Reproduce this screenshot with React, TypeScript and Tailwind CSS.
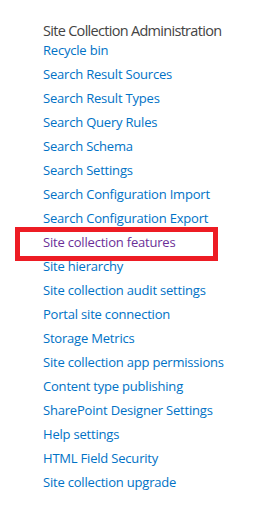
import React from "react";

const links = [
  "Recycle bin",
  "Search Result Sources",
  "Search Result Types",
  "Search Query Rules",
  "Search Schema",
  "Search Settings",
  "Search Configuration Import",
  "Search Configuration Export",
  "Site collection features",
  "Site hierarchy",
  "Site collection audit settings",
  "Portal site connection",
  "Storage Metrics",
  "Site collection app permissions",
  "Content type publishing",
  "SharePoint Designer Settings",
  "Help settings",
  "HTML Field Security",
  "Site collection upgrade",
];

export default function App() {
  return (
    <div
      className="w-[268px] h-[517px] bg-white pl-[43px] pt-[23px]"
      style={{ fontFamily: '"Segoe UI", "Open Sans", "Liberation Sans", sans-serif' }}
    >
      <h2 className="text-[14.5px] leading-[15px] text-[#444444] font-normal tracking-[-0.7px]">
        Site Collection Administration
      </h2>
      <ul className="flex flex-col">
        {links.map((l, i) => (
          <li key={l} className="relative h-[24px] flex items-center">
            {i === 8 && (
              <span className="absolute left-[-28px] top-[-3px] w-[203px] h-[34px] border-[5px] border-[#ed1c24] pointer-events-none" />
            )}
            <a
              href="#"
              className={`text-[13px] leading-[16px] whitespace-nowrap tracking-[-0.2px] ${
                i === 8 ? "text-[#6b2f98]" : "text-[#0072c6]"
              }`}
            >
              {l}
            </a>
          </li>
        ))}
      </ul>
    </div>
  );
}
